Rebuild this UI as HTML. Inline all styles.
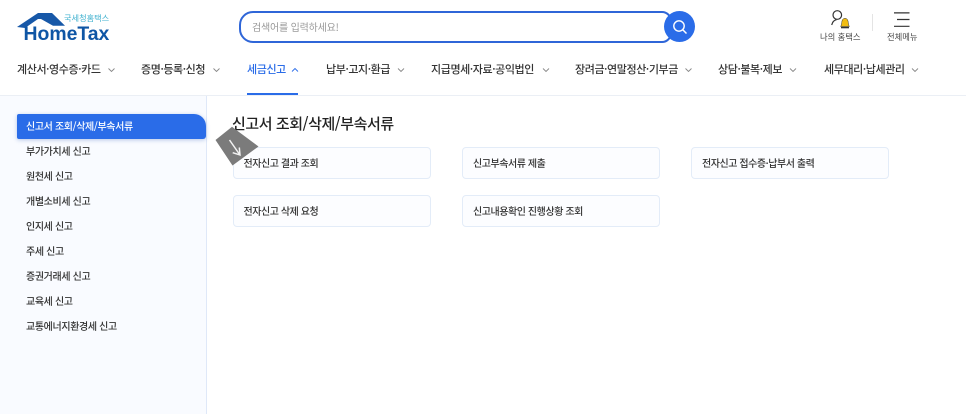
<!DOCTYPE html>
<html lang="ko">
<head>
<meta charset="utf-8">
<style>
html,body{margin:0;padding:0;background:#fff;}
body{width:966px;height:414px;overflow:hidden;position:relative;font-family:"Liberation Sans","Noto Sans CJK KR",sans-serif;color:#222;}
.a{position:absolute;white-space:nowrap;line-height:1;}
.nav{font-family:"Noto Sans CJK KR",sans-serif;font-size:11px;letter-spacing:-.4px;font-weight:500;color:#333;top:62px;line-height:14px;}
.side{font-family:"Noto Sans CJK KR",sans-serif;font-size:10px;letter-spacing:-.36px;font-weight:500;color:#333;left:26px;line-height:14px;}
.card{position:absolute;width:196px;height:30px;border:1px solid #e3ecf8;border-radius:4px;background:#fcfdff;box-sizing:content-box;font-family:"Noto Sans CJK KR",sans-serif;font-size:10px;letter-spacing:-.44px;font-weight:500;color:#333;line-height:30px;text-indent:10px;}
svg{position:absolute;overflow:visible;}
</style>
</head>
<body>
<!-- logo -->
<svg style="left:0;top:0" width="120" height="45"><path d="M17 27 L38 13 L52 13 L65 25.700 L53 25.700 L41 19 L38 19 L25 28 Z" fill="#1758a8"/></svg>
<div class="a" style="left:23.500px;top:24.500px;font-family:'Liberation Sans',sans-serif;font-weight:700;font-size:19.400px;color:#0f56a5;">HomeTax</div>
<div class="a" style="left:64px;top:13px;font-family:'Noto Sans CJK KR',sans-serif;font-size:8.200px;line-height:11px;color:#3fb1cf;">국세청홈택스</div>

<!-- search -->
<div class="a" style="left:239px;top:11px;width:433px;height:32px;box-sizing:border-box;border:2px solid #2f66d8;border-radius:14px 10px 10px 14px;background:#fff;"></div>
<div class="a" style="left:252px;top:20px;font-family:'Noto Sans CJK KR',sans-serif;font-size:10px;letter-spacing:-.2px;line-height:14px;color:#999;">검색어를 입력하세요!</div>
<div class="a" style="left:664px;top:11px;width:31px;height:31px;border-radius:50%;background:#2a6ce8;"></div>
<svg style="left:664px;top:11px" width="31" height="31"><circle cx="15" cy="15" r="5.200" fill="none" stroke="#fff" stroke-width="1.400"/><path d="M19 19 L22.500 22.500" stroke="#fff" stroke-width="1.500"/></svg>

<!-- right icons -->
<svg style="left:828px;top:10px" width="26" height="20"><circle cx="9.300" cy="5" r="4.300" fill="none" stroke="#333" stroke-width="1.200"/><path d="M3.700 15 C4.500 12 6 10 8.500 9.800" fill="none" stroke="#333" stroke-width="1.200"/><path d="M12.500 16.500 C13.500 15.500 13.500 13.500 14 11 C14.500 7.500 19.500 7.500 20 11 C20.500 13.500 20.500 15.500 21.500 16.500Z" fill="#f2bd12" stroke="#333" stroke-width=".5"/><rect x="13" y="16.800" width="8" height="1.500" fill="#333"/></svg>
<div class="a" style="left:820px;top:30.500px;font-family:'Noto Sans CJK KR',sans-serif;font-size:8.300px;line-height:13px;color:#444;">나의 홈택스</div>
<div class="a" style="left:872px;top:14px;width:1px;height:17px;background:#e4e4e4;"></div>
<svg style="left:894px;top:12px" width="16" height="16"><path d="M0 .9H15.500M3 7.500H15.500M0 14.300H15.500" stroke="#333" stroke-width="1.200"/></svg>
<div class="a" style="left:887px;top:30.500px;font-family:'Noto Sans CJK KR',sans-serif;font-size:8.300px;line-height:13px;color:#444;">전체메뉴</div>

<!-- nav -->
<div class="a nav" style="left:17px;">계산서·영수증·카드</div>
<div class="a nav" style="left:141px;">증명·등록·신청</div>
<div class="a nav" style="left:247px;color:#2a6ce8;">세금신고</div>
<div class="a nav" style="left:326px;">납부·고지·환급</div>
<div class="a nav" style="left:431px;">지급명세·자료·공익법인</div>
<div class="a nav" style="left:575px;">장려금·연말정산·기부금</div>
<div class="a nav" style="left:718px;">상담·불복·제보</div>
<div class="a nav" style="left:824px;">세무대리·납세관리</div>
<svg style="left:0;top:0" width="966" height="96" fill="none" stroke="#888" stroke-width=".9">
<path d="M108.500 68.500l3 3 3-3M213.500 68.500l3 3 3-3M398 68.500l3 3 3-3M685.500 68.500l3 3 3-3M790 68.500l3 3 3-3M912 68.500l3 3 3-3M543 68.500l3 3 3-3"/>
<path d="M292 71.500l3-3 3 3" stroke="#2a6ce8"/>
</svg>
<div class="a" style="left:247px;top:93px;width:51px;height:2px;background:#2a6ce8;"></div>
<div class="a" style="left:0;top:95px;width:966px;height:1px;background:#ebeff5;"></div>

<!-- sidebar -->
<div class="a" style="left:0;top:96px;width:206px;height:318px;background:#f9fbff;border-right:1px solid #dfe8f8;"></div>
<div class="a" style="left:17px;top:114px;width:189px;height:25px;background:#2a6ce8;border-radius:2px 12px 3px 2px;box-shadow:0 1px 4px rgba(30,80,180,.3);"></div>
<div class="a side" style="top:119px;color:#fff;">신고서 조회/삭제/부속서류</div>
<div class="a side" style="top:144px;">부가가치세 신고</div>
<div class="a side" style="top:169px;">원천세 신고</div>
<div class="a side" style="top:194px;">개별소비세 신고</div>
<div class="a side" style="top:219px;">인지세 신고</div>
<div class="a side" style="top:244px;">주세 신고</div>
<div class="a side" style="top:269px;">증권거래세 신고</div>
<div class="a side" style="top:294px;">교육세 신고</div>
<div class="a side" style="top:319px;">교통에너지환경세 신고</div>

<!-- content -->
<div class="a" style="left:232px;top:113.500px;font-family:'Noto Sans CJK KR',sans-serif;font-size:15px;letter-spacing:-.43px;font-weight:500;line-height:20px;color:#222;">신고서 조회/삭제/부속서류</div>
<div class="card" style="left:232.500px;top:147px;">전자신고 결과 조회</div>
<div class="card" style="left:462px;top:147px;">신고부속서류 제출</div>
<div class="card" style="left:691px;top:147px;">전자신고 접수증·납부서 출력</div>
<div class="card" style="left:232.500px;top:195px;">전자신고 삭제 요청</div>
<div class="card" style="left:462px;top:195px;">신고내용확인 진행상황 조회</div>

<!-- cursor -->
<svg style="left:0;top:0" width="966" height="414"><path d="M215.500 140 L232 126.800 L258.500 146.500 L232.500 165.500Z" fill="#7b7b7b"/><path d="M229.500 140 L240 155M239.300 147.500 L240 155 L232.700 152.700" fill="none" stroke="#f2f2f2" stroke-width="1.500"/></svg>
</body>
</html>
